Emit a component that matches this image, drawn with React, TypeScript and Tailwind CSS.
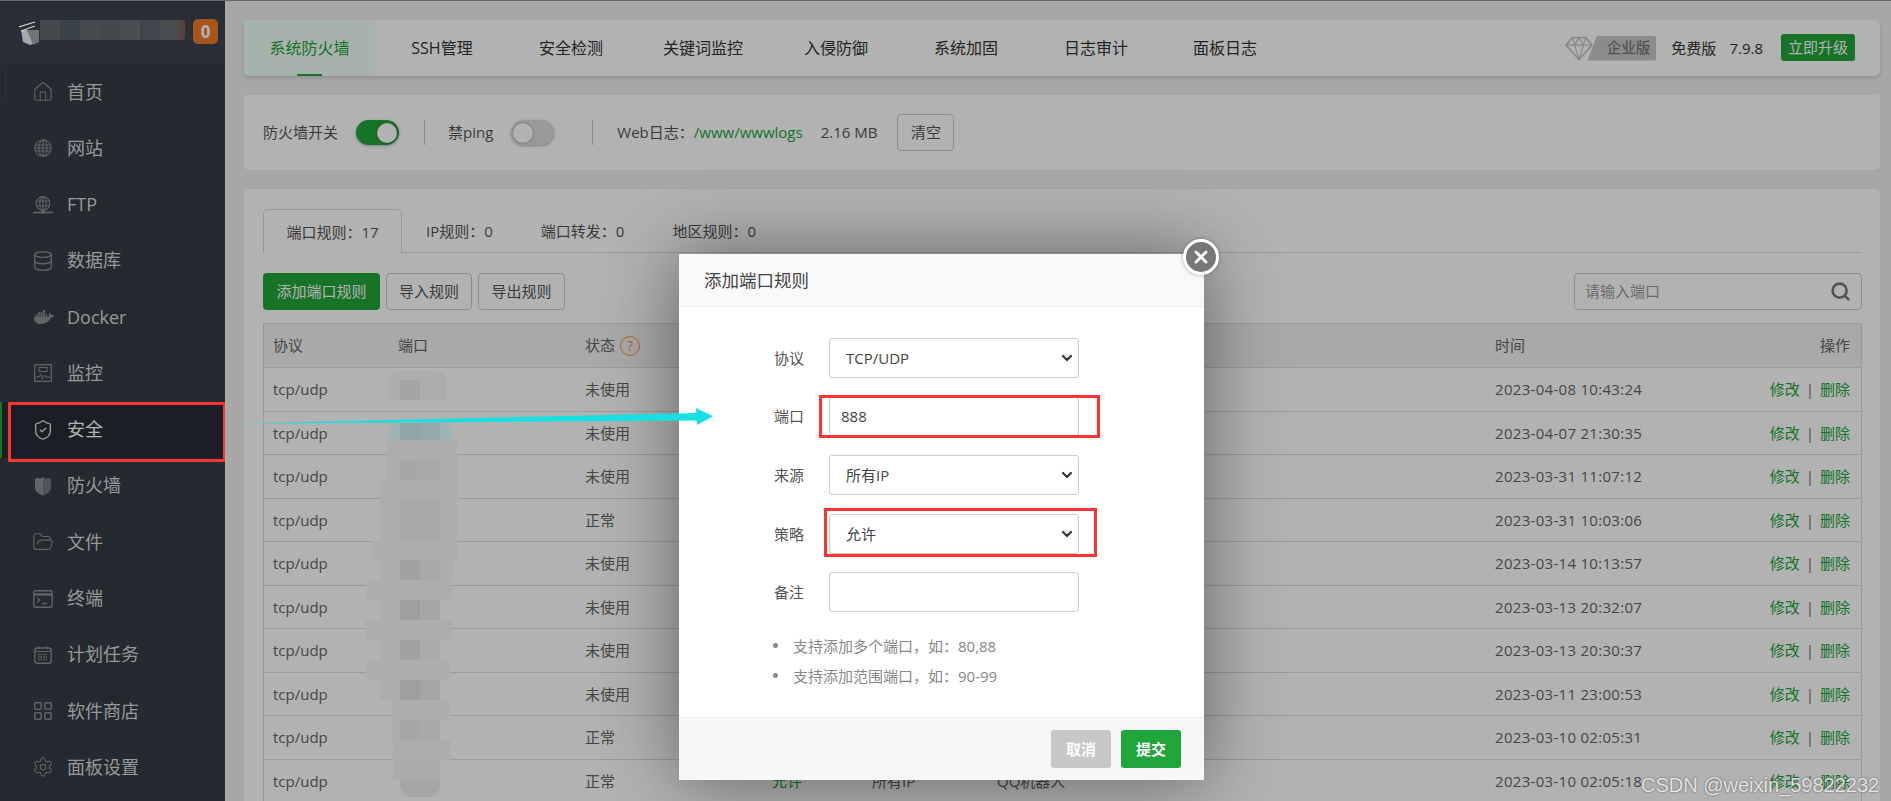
import { ChevronDown, Database, FolderOpen, Home, LayoutGrid, Search, Settings, ShieldCheck, X } from "lucide-react";
import { FaDocker } from "react-icons/fa";
import type { ReactNode } from "react";

const icon = "h-[18px] w-[18px] shrink-0";
const lucideIcon = "-ml-[2px] h-[22px] w-[22px] shrink-0";

function Globe() {
  return (
    <svg viewBox="0 0 18 18" className={icon} fill="none" stroke="currentColor" strokeWidth="1.1">
      <circle cx="9" cy="9" r="8.2" />
      <ellipse cx="9" cy="9" rx="4" ry="8.2" />
      <path d="M9 .8v16.4M1.5 6h15M1.5 12h15M.8 9h16.4" />
    </svg>
  );
}

function FtpIcon() {
  return (
    <svg viewBox="0 0 20 18" className="-ml-px h-[18px] w-[20px] shrink-0" fill="none" stroke="currentColor" strokeWidth="1.1">
      <circle cx="10" cy="7.5" r="6.8" />
      <ellipse cx="10" cy="7.5" rx="3.2" ry="6.8" />
      <path d="M10 .7v13.6M3.6 5h12.8M3.6 10h12.8" />
      <path d="M0 16.5h20" strokeWidth="1.6" />
      <rect x="8" y="14.5" width="4" height="3" fill="currentColor" stroke="none" />
    </svg>
  );
}

function MonitorIcon() {
  return (
    <svg viewBox="0 0 18 18" className={icon} fill="none" stroke="currentColor" strokeWidth="1.3">
      <rect x=".7" y=".7" width="16.6" height="16.6" />
      <rect x="5" y="3.5" width="8" height="4" strokeWidth="1" />
      <path d="M2 13h3l1.5-3 2 5 2-4 1.5 2h4" strokeWidth="1" />
    </svg>
  );
}

function HalfShield() {
  return (
    <svg viewBox="0 0 18 20" className="h-[20px] w-[18px] shrink-0">
      <path d="M9 1 6 2.8 3.5 1.8 1 3v9c0 3.5 4 6 8 7.5z" fill="currentColor" />
      <path d="m9 1 3 1.8 2.5-1L17 3v9c0 3.5-4 6-8 7.5z" fill="currentColor" opacity=".72" />
    </svg>
  );
}

function TerminalIcon() {
  return (
    <svg viewBox="0 0 20 18" className="-ml-px h-[18px] w-[20px] shrink-0" fill="none" stroke="currentColor">
      <rect x=".8" y=".8" width="18.4" height="16.4" rx="1.5" strokeWidth="1.4" />
      <path d="M1 4.5h18" strokeWidth="2.4" />
      <path d="m4 7.5 3 2.5-3 2.5M9 13.5h5" strokeWidth="1.3" />
    </svg>
  );
}

function CalendarIcon() {
  return (
    <svg viewBox="0 0 18 18" className={icon} fill="none" stroke="currentColor">
      <rect x=".8" y="2" width="16.4" height="15.2" rx="2.5" strokeWidth="1.4" />
      <path d="M5 .5V3M13 .5V3M1 5.5h16" strokeWidth="1.2" />
      <path d="M4 8.5h10M4 11h10M4 13.5h10" strokeWidth="1.3" strokeDasharray="1.5 1" />
    </svg>
  );
}

const menu: { label: string; icon: ReactNode }[] = [
  { label: "首页", icon: <Home className={lucideIcon} strokeWidth={1.2} /> },
  { label: "网站", icon: <Globe /> },
  { label: "FTP", icon: <FtpIcon /> },
  { label: "数据库", icon: <Database className={lucideIcon} strokeWidth={1.4} /> },
  { label: "Docker", icon: <FaDocker className="h-[20px] w-[20px] shrink-0" /> },
  { label: "监控", icon: <MonitorIcon /> },
  { label: "安全", icon: <ShieldCheck className={lucideIcon} strokeWidth={1.5} /> },
  { label: "防火墙", icon: <HalfShield /> },
  { label: "文件", icon: <FolderOpen className={lucideIcon} strokeWidth={1.2} /> },
  { label: "终端", icon: <TerminalIcon /> },
  { label: "计划任务", icon: <CalendarIcon /> },
  { label: "软件商店", icon: <LayoutGrid className={lucideIcon} strokeWidth={1.6} /> },
  { label: "面板设置", icon: <Settings className={lucideIcon} strokeWidth={1.1} /> },
];

const topTabs = [
  { label: "系统防火墙", width: "w-[131px]" },
  { label: "SSH管理", width: "w-[134px]" },
  { label: "安全检测", width: "w-[124px]" },
  { label: "关键词监控", width: "w-[140px]" },
  { label: "入侵防御", width: "w-[126px]" },
  { label: "系统加固", width: "w-[134px]" },
  { label: "日志审计", width: "w-[126px]" },
  { label: "面板日志", width: "w-[132px]" },
];

const rows = [
  { status: "未使用", time: "2023-04-08 10:43:24", note: "" },
  { status: "未使用", time: "2023-04-07 21:30:35", note: "" },
  { status: "未使用", time: "2023-03-31 11:07:12", note: "" },
  { status: "正常", time: "2023-03-31 10:03:06", note: "" },
  { status: "未使用", time: "2023-03-14 10:13:57", note: "" },
  { status: "未使用", time: "2023-03-13 20:32:07", note: "" },
  { status: "未使用", time: "2023-03-13 20:30:37", note: "" },
  { status: "未使用", time: "2023-03-11 23:00:53", note: "" },
  { status: "正常", time: "2023-03-10 02:05:31", note: "" },
  { status: "正常", time: "2023-03-10 02:05:18", note: "QQ机器人" },
];

// mosaic over the port column, in final colours
const portBlur = [
  "left-[388px] top-[370px] h-[30px] w-[59px] rounded-t-[14px] bg-[#adadac]",
  "left-[400px] top-[380px] h-[20px] w-[20px] bg-[#a4a4a4]",
  "left-[420px] top-[380px] h-[20px] w-[20px] bg-[#abacab]",
  "left-[388px] top-[423px] h-[17px] w-[65px] rounded-t-[12px] bg-[#a0b4b5]",
  "left-[400px] top-[423px] h-[17px] w-[20px] bg-[#8fa5a6]",
  "left-[420px] top-[423px] h-[17px] w-[20px] bg-[#94a9aa]",
  "left-[387px] top-[440px] h-[20px] w-[70px] bg-[#adadad]",
  "left-[387px] top-[460px] h-[20px] w-[70px] bg-[#adadad]",
  "left-[400px] top-[460px] h-[20px] w-[20px] bg-[#a5a8a7]",
  "left-[420px] top-[460px] h-[20px] w-[20px] bg-[#a8a8a8]",
  "left-[380px] top-[480px] h-[60px] w-[78px] bg-[#adadad]",
  "left-[400px] top-[500px] h-[40px] w-[40px] bg-[#a9a9a9]",
  "left-[372px] top-[540px] h-[20px] w-[85px] bg-[#adadad]",
  "left-[380px] top-[560px] h-[20px] w-[73px] bg-[#adadad]",
  "left-[400px] top-[560px] h-[20px] w-[20px] bg-[#a2a2a2]",
  "left-[420px] top-[560px] h-[20px] w-[20px] bg-[#a9a9a9]",
  "left-[366px] top-[580px] h-[20px] w-[86px] bg-[#adadad]",
  "left-[380px] top-[600px] h-[20px] w-[60px] bg-[#adadad]",
  "left-[400px] top-[600px] h-[20px] w-[20px] bg-[#9e9e9e]",
  "left-[420px] top-[600px] h-[20px] w-[20px] bg-[#a5a7a6]",
  "left-[365px] top-[620px] h-[20px] w-[87px] bg-[#adadad]",
  "left-[380px] top-[640px] h-[20px] w-[60px] bg-[#adadad]",
  "left-[400px] top-[640px] h-[20px] w-[20px] bg-[#a2a2a2]",
  "left-[420px] top-[640px] h-[20px] w-[20px] bg-[#ababab]",
  "left-[366px] top-[660px] h-[20px] w-[84px] bg-[#adadad]",
  "left-[380px] top-[680px] h-[20px] w-[60px] bg-[#adadad]",
  "left-[400px] top-[680px] h-[20px] w-[20px] bg-[#9e9e9e]",
  "left-[420px] top-[680px] h-[20px] w-[20px] bg-[#a5a5a5]",
  "left-[392px] top-[700px] h-[20px] w-[58px] bg-[#adadad]",
  "left-[392px] top-[720px] h-[20px] w-[48px] bg-[#adadad]",
  "left-[400px] top-[720px] h-[20px] w-[20px] bg-[#a6a6a6]",
  "left-[420px] top-[720px] h-[20px] w-[20px] bg-[#a9a9a9]",
  "left-[393px] top-[740px] h-[20px] w-[57px] bg-[#aaadac]",
  "left-[393px] top-[760px] h-[20px] w-[47px] bg-[#ababab]",
  "left-[400px] top-[780px] h-[17px] w-[40px] rounded-b-[12px] bg-[#a6a6a6]",
];

const logoBlur = ["bg-[#45484c]", "bg-[#3a4249]", "bg-[#474a4e]", "bg-[#45494d]", "bg-[#4a4e51]", "bg-[#3f454b]", "bg-[#484c4f]"];

function Sidebar() {
  return (
    <aside className="w-[225px] shrink-0 bg-[#363d45] text-[18px] text-[#d6d8da]">
      <div className="flex h-[64px] items-start bg-[#3c4350] pl-[193px] pt-[19px]">
        <span className="flex h-[25px] w-[25px] items-center justify-center rounded-[5px] bg-[#ef7b27] text-[17px] font-bold text-white">0</span>
      </div>
      {menu.map((m) => (
        <div
          key={m.label}
          className={`flex h-[56.27px] items-center ${m.label === "安全" ? "border-l-2 border-[#20a53a] bg-[#282c36] pl-[32px] text-white" : "pl-[34px]"}`}
        >
          <span className={`flex w-[33px] ${m.label === "安全" ? "text-[#dcdcdc]" : "text-[#8a8f94]"}`}>{m.icon}</span>
          {m.label}
        </div>
      ))}
    </aside>
  );
}

function Toggle({ on }: { on: boolean }) {
  return (
    <span className={`flex h-[25px] w-[43px] items-center rounded-full px-[2px] shadow-[0_1px_3px_rgba(0,0,0,.3)] ${on ? "justify-end bg-[#20a53a]" : "justify-start bg-[#dcdcdc]"}`}>
      <span className="h-[20px] w-[20px] rounded-full bg-white shadow-[0_0_2px_rgba(0,0,0,.5)]" />
    </span>
  );
}

function TopBar() {
  return (
    <div className="flex h-[56px] items-center rounded-[5px] bg-white shadow-[0_2px_4px_rgba(0,0,0,.15)]">
      {topTabs.map((t, i) => (
        <div
          key={t.label}
          className={`relative flex h-full items-center justify-center text-[16px] ${t.width} ${i === 0 ? "rounded-l-[5px] bg-[#f1fff7] text-[#20a53a]" : "text-[#333]"}`}
        >
          {t.label}
          {i === 0 && <span className="absolute bottom-0 left-[53px] h-[2px] w-[25px] bg-[#20a53a]" />}
        </div>
      ))}
      <div className="ml-auto flex items-center pr-[25px] text-[15px] text-[#333]">
        <svg viewBox="0 0 30 26" className="relative z-10 h-[25px] w-[30px]" fill="none" stroke="#888" strokeWidth="1.7" strokeLinejoin="round">
          <path d="M8 1.5h14l6.5 8L15 24.5 1.5 9.5z" />
          <path d="M1.5 9.5h27M8 1.5l2.5 8L15 24.5l4.5-15L22 1.5M10.5 9.5 15 1.5l4.5 8" strokeWidth="1.2" />
        </svg>
        <span className="-ml-[7px] flex h-[25px] w-[69px] items-center justify-end rounded-r-[2px] bg-[#c8c8c8] pr-[6px] text-[14.5px] font-medium text-[#777] [clip-path:polygon(14%_0,100%_0,100%_100%,0_100%)]">企业版</span>
        <span className="ml-[15px]">免费版</span>
        <span className="ml-[13px]">7.9.8</span>
        <span className="ml-[18px] flex h-[27px] w-[74px] -translate-y-[1px] items-center justify-center rounded-[3px] bg-[#20a53a] text-white">立即升级</span>
      </div>
    </div>
  );
}

function StatusBar() {
  return (
    <div className="mt-[19px] flex h-[75px] items-center rounded-[5px] bg-white pl-[19px] text-[15px] text-[#555]">
      <span>防火墙开关</span>
      <span className="ml-[18px]"><Toggle on /></span>
      <span className="ml-[25px] h-[25px] w-px bg-[#ccc]" />
      <span className="ml-[23px]">禁ping</span>
      <span className="ml-[18px]"><Toggle on={false} /></span>
      <span className="ml-[38px] h-[25px] w-px bg-[#ccc]" />
      <span className="ml-[24px]">Web日志：</span>
      <span className="text-[#20a53a]">/www/wwwlogs</span>
      <span className="ml-[18px]">2.16 MB</span>
      <button className="ml-[20px] h-[37px] w-[57px] rounded-[4px] border border-[#ccc] bg-white text-[15px] text-[#555]">清空</button>
    </div>
  );
}

function RuleTable() {
  const cols = "grid grid-cols-[125px_187px_187px_100px_125px_498px_1fr_auto] items-center pl-[9px] pr-[11px]";
  return (
    <div className="mt-[13px] border-x border-t border-[#ddd] text-[#666]">
      <div className={`${cols} h-[44px] border-b border-[#ddd] bg-[#f2f2f2]`}>
        <span>协议</span>
        <span>端口</span>
        <span className="flex items-center gap-[5px]">
          状态
          <span className="flex h-[20px] w-[20px] items-center justify-center rounded-full border border-[#f7941d] text-[14px] text-[#f7941d]">?</span>
        </span>
        <span>策略</span>
        <span>来源</span>
        <span>备注</span>
        <span>时间</span>
        <span className="text-right">操作</span>
      </div>
      {rows.map((r) => (
        <div key={r.time} className={`${cols} h-[43.55px] border-b border-[#ddd]`}>
          <span>tcp/udp</span>
          <span />
          <span>{r.status}</span>
          <span className="text-[#20a53a]">允许</span>
          <span>所有IP</span>
          <span>{r.note}</span>
          <span className="tracking-[0.3px]">{r.time}</span>
          <span className="text-right text-[#20a53a]">
            修改<span className="mx-[6px] text-[#666]">|</span>删除
          </span>
        </div>
      ))}
    </div>
  );
}

function RulesCard() {
  return (
    <div className="mt-[19px] h-[640px] rounded-[5px] bg-white pl-[19px] pr-[18px] pt-[20px] text-[15px] text-[#555]">
      <div className="flex h-[44px] items-stretch border-b border-[#ddd]">
        <span className="-mb-px flex w-[139px] items-center justify-center rounded-t-[5px] border border-b-0 border-[#ddd] bg-white pt-px">端口规则：17</span>
        <span className="flex items-center px-[24px] pt-px">IP规则：0</span>
        <span className="flex items-center px-[24px] pt-px">端口转发：0</span>
        <span className="flex items-center px-[24px] pt-px">地区规则：0</span>
      </div>
      <div className="mt-[20px] flex h-[37px] items-stretch gap-[6px]">
        <button className="w-[117px] rounded-[4px] bg-[#20a53a] text-[15px] text-white">添加端口规则</button>
        <button className="w-[86px] rounded-[4px] border border-[#ccc] text-[15px]">导入规则</button>
        <button className="w-[87px] rounded-[4px] border border-[#ccc] text-[15px]">导出规则</button>
        <div className="ml-auto flex w-[288px] items-center justify-between rounded-[4px] border border-[#ccc] pl-[10px] pr-[10px] text-[#999]">
          请输入端口
          <Search className="h-[21px] w-[21px] text-[#777]" strokeWidth={3} />
        </div>
      </div>
      <RuleTable />
    </div>
  );
}

function FormRow({ label, children }: { label: string; children: ReactNode }) {
  return (
    <div className="mb-[18.6px] flex h-[40px] items-center text-[15px] text-[#555]">
      <span className="w-[125px] text-right">{label}</span>
      <div className="ml-[25px] flex h-[40px] w-[250px] items-center justify-between rounded-[3px] border border-[#ccc] bg-white text-[#444]">
        {children}
      </div>
    </div>
  );
}

function SelectValue({ text }: { text: string }) {
  return (
    <>
      <span className="pl-[16px]">{text}</span>
      <ChevronDown className="mr-[3px] h-[16px] w-[16px] text-[#333]" strokeWidth={3.2} />
    </>
  );
}

function Modal() {
  return (
    <div className="absolute left-[679px] top-[254px] flex h-[526px] w-[525px] flex-col bg-white text-[15px] shadow-[0_0_70px_rgba(0,0,0,.45)]">
      <div className="flex h-[53px] items-center border-b border-[#eee] bg-[#f8f8f8] pl-[25px] text-[17.5px] text-[#444]">添加端口规则</div>
      <div className="flex-1 pt-[31px]">
        <FormRow label="协议"><SelectValue text="TCP/UDP" /></FormRow>
        <FormRow label="端口"><span className="pl-[11px]">888</span></FormRow>
        <FormRow label="来源"><SelectValue text="所有IP" /></FormRow>
        <FormRow label="策略"><SelectValue text="允许" /></FormRow>
        <FormRow label="备注"><span /></FormRow>
        <ul className="ml-[94px] mt-px text-[#888]">
          <li className="flex h-[30px] items-center gap-[15px]"><span className="h-[5px] w-[5px] rounded-full bg-[#888]" />支持添加多个端口，如：80,88</li>
          <li className="flex h-[30px] items-center gap-[15px]"><span className="h-[5px] w-[5px] rounded-full bg-[#888]" />支持添加范围端口，如：90-99</li>
        </ul>
      </div>
      <div className="flex h-[63px] items-center justify-end gap-[10px] border-t border-[#eee] bg-[#f6f8f8] pr-[23px]">
        <button className="h-[38px] w-[60px] rounded-[3px] bg-[#c8c8c8] text-[15px] font-bold text-white">取消</button>
        <button className="h-[38px] w-[60px] rounded-[3px] bg-[#20a53a] text-[15px] font-bold text-white">提交</button>
      </div>
      <span className="absolute -right-[15px] -top-[15px] flex h-[36px] w-[36px] items-center justify-center rounded-full border-[3px] border-white bg-[#777] shadow-[0_0_4px_rgba(0,0,0,.3)]">
        <X className="h-[20px] w-[20px] text-white" strokeWidth={3.4} />
      </span>
    </div>
  );
}

export default function App() {
  return (
    <div className="relative h-[801px] w-[1891px] overflow-hidden bg-[#f0f0f0] [font-family:'Open_Sans','Noto_Sans_CJK_SC',sans-serif]">
      <div className="flex h-full">
        <Sidebar />
        <main className="min-w-0 flex-1 pl-[19px] pr-[11px] pt-[20px]">
          <TopBar />
          <StatusBar />
          <RulesCard />
        </main>
      </div>

      <div className="absolute inset-0 bg-black/30" />
      <div className="absolute inset-x-0 top-0 h-px bg-[#666]" />
      <div className="absolute -left-px top-[67px] h-[33px] w-[7px] rounded-r-[3px] border border-[#2f343a]" />

      {/* blurred logo and port numbers */}
      <svg viewBox="0 0 22 26" className="absolute left-[19px] top-[20px] h-[26px] w-[22px]">
        <path d="M2 10h18v12l-9 3-7-3z" fill="#a8a8a8" />
        <path d="M8 10h12v12l-6 3z" fill="#70757a" />
        <path d="m0 7 16-5M2 11 16 6" stroke="#d0d0d0" strokeWidth="1.2" />
      </svg>
      <div className="absolute left-[40px] top-[20px] flex h-[20px] w-[145px] rounded-r-[3px] bg-[#5a4238]">
        {logoBlur.map((c) => (
          <span key={c} className={`h-full w-[20px] ${c}`} />
        ))}
      </div>
      {portBlur.map((c) => (
        <div key={c} className={`absolute ${c}`} />
      ))}

      <Modal />

      {/* annotations drawn over the page */}
      <div className="absolute left-[8px] top-[402px] h-[59.5px] w-[217px] border-[3px] border-r-2 border-[#fa3333]" />
      <div className="absolute left-[819px] top-[395px] h-[43px] w-[281px] border-[3px] border-[#fa3333]" />
      <div className="absolute left-[824px] top-[508px] h-[49px] w-[273px] border-[3px] border-[#fa3333]" />
      <svg viewBox="0 0 480 20" className="absolute left-[238px] top-[407px] h-[20px] w-[480px]">
        <path d="M3 16.5 459 6v7.5z" fill="#18e0e2" />
        <path d="M458 1 475 9.3 459 18z" fill="#18e0e2" />
      </svg>
      <div className="absolute left-[1641px] top-[770px] whitespace-nowrap text-[20px] text-white/80 [font-family:'Liberation_Sans',sans-serif] [text-shadow:0_0_2px_rgba(0,0,0,.6)]">
        CSDN @weixin_59822232
      </div>
    </div>
  );
}
